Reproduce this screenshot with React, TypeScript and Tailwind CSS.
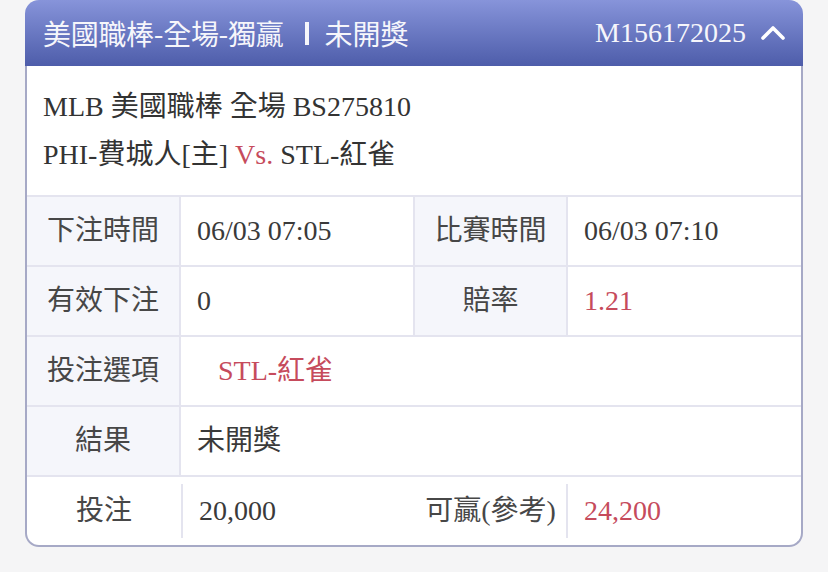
import React from "react";

const serif = { fontFamily: '"Liberation Serif", "Noto Sans CJK TC", serif' };

export default function App() {
  const label = "flex items-center justify-center text-[28px] text-[#474747]";
  const value = "flex items-center pl-4 text-[28px] text-[#3a3a3a]";
  const red = "text-[#c64b5c]";
  return (
    <div className="w-[828px] h-[572px] bg-[#f5f5f6] pl-[25px]" style={serif}>
      <div className="w-[778px]">
        <div className="h-[66px] rounded-t-[14px] bg-gradient-to-b from-[#8794da] to-[#4e5daa] flex items-center pl-[18px] pr-[17px] text-white">
          <span className="text-[28px] tracking-[-0.3px] text-[#f6f6fb]" style={{ fontFamily: '"Noto Sans CJK TC", sans-serif' }}>
            美國職棒-全場-獨贏
          </span>
          <span className="ml-[22px] mr-[15px] w-[4px] h-[23px] bg-[#f6f6fb]" />
          <span className="text-[28px] text-[#f6f6fb]" style={{ fontFamily: '"Noto Sans CJK TC", sans-serif' }}>
            未開獎
          </span>
          <span className="ml-auto text-[28px] text-[#f6f6fb]">M156172025</span>
          <svg width="26" height="20" viewBox="0 0 26 20" className="ml-[14px]">
            <polyline points="3,15 13,5 23,15" fill="none" stroke="#ffffff" strokeWidth="3.6" strokeLinecap="round" strokeLinejoin="round" />
          </svg>
        </div>
        <div className="border-x-2 border-b-2 border-[#a6a9c6] rounded-b-[14px] bg-white overflow-hidden">
          <div className="h-[129px] flex flex-col justify-center pl-4 text-[28px] text-[#333] leading-[48px]">
            <div>MLB 美國職棒 全場 BS275810</div>
            <div>
              PHI-費城人[主] <span className={red}>Vs.</span> STL-紅雀
            </div>
          </div>
          <div className="flex h-[70px] border-t-2 border-[#e4e4ef]">
            <div className={`${label} w-[154px] bg-[#f5f6fb] border-r-2 border-[#e4e4ef]`}>下注時間</div>
            <div className={`${value} w-[234px] border-r-2 border-[#e4e4ef]`}>06/03 07:05</div>
            <div className={`${label} w-[153px] bg-[#f5f6fb] border-r-2 border-[#e4e4ef]`}>比賽時間</div>
            <div className={`${value} flex-1`}>06/03 07:10</div>
          </div>
          <div className="flex h-[70px] border-t-2 border-[#e4e4ef]">
            <div className={`${label} w-[154px] bg-[#f5f6fb] border-r-2 border-[#e4e4ef]`}>有效下注</div>
            <div className={`${value} w-[234px] border-r-2 border-[#e4e4ef]`}>0</div>
            <div className={`${label} w-[153px] bg-[#f5f6fb] border-r-2 border-[#e4e4ef]`}>賠率</div>
            <div className={`${value} flex-1 ${red}`}>1.21</div>
          </div>
          <div className="flex h-[70px] border-t-2 border-[#e4e4ef]">
            <div className={`${label} w-[154px] bg-[#f5f6fb] border-r-2 border-[#e4e4ef]`}>投注選項</div>
            <div className={`${value} flex-1 pl-[37px] ${red}`}>STL-紅雀</div>
          </div>
          <div className="flex h-[70px] border-t-2 border-[#e4e4ef]">
            <div className={`${label} w-[154px] bg-[#f5f6fb] border-r-2 border-[#e4e4ef]`}>結果</div>
            <div className={`${value} flex-1`}>未開獎</div>
          </div>
          <div className="flex h-[70px] border-t-2 border-[#e4e4ef]">
            <div className={`${label} w-[154px]`}>投注</div>
            <div className="w-[2px] my-[7px] bg-[#e4e4ef]" />
            <div className={`${value} w-[232px]`}>20,000</div>
            <div className={`${label} w-[151px]`}>可贏(參考)</div>
            <div className="w-[2px] my-[7px] bg-[#e4e4ef]" />
            <div className={`${value} flex-1 ${red}`}>24,200</div>
          </div>
        </div>
      </div>
    </div>
  );
}
